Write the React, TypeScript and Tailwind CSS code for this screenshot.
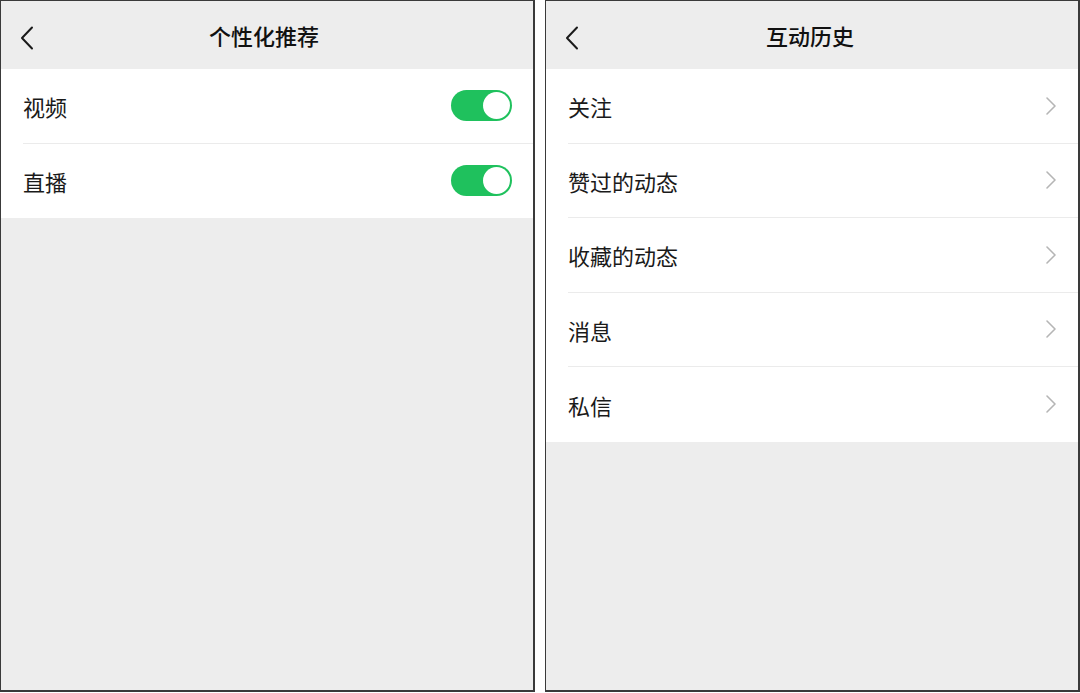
import { ReactNode } from "react";

const FONT = "font-['Noto_Sans_CJK_SC','Noto_Sans',sans-serif]";

function BackIcon() {
  return (
    <svg width="14" height="24" viewBox="0 0 14 24" fill="none">
      <path
        d="M12 1.5 L2 12 L12 22.5"
        stroke="#1a1a1a"
        strokeWidth="2"
        strokeLinecap="round"
        strokeLinejoin="round"
      />
    </svg>
  );
}

function ChevronIcon() {
  return (
    <svg width="12" height="20" viewBox="0 0 12 20" fill="none">
      <path
        d="M2 2 L10 10 L2 18"
        stroke="#b5b5b5"
        strokeWidth="1.6"
        strokeLinecap="round"
        strokeLinejoin="round"
      />
    </svg>
  );
}

function Toggle() {
  return (
    <div className="flex h-[31px] w-[61px] items-center justify-end rounded-full bg-[#1fc15d] px-[2px]">
      <div className="h-[27px] w-[27px] rounded-full bg-white" />
    </div>
  );
}

function Header({ title, shift }: { title: string; shift?: string }) {
  return (
    <div className="relative flex h-[68px] items-center justify-center bg-[#ededed]">
      <div className="absolute left-[19px] top-[25px]">
        <BackIcon />
      </div>
      <h1 className={`text-[22px] font-medium text-[#111] ${shift ?? ""}`}>
        {title}
      </h1>
    </div>
  );
}

function Row({
  label,
  right,
  last,
}: {
  label: string;
  right: ReactNode;
  last?: boolean;
}) {
  return (
    <div className="flex h-[74.5px] flex-col">
      <div className="flex flex-1 items-center justify-between pr-[21px]">
        <span className="pt-[2px] text-[22px] text-[#1a1a1a]">{label}</span>
        {right}
      </div>
      {!last && <div className="h-px bg-[#ebebeb]" />}
    </div>
  );
}

function Panel({ children }: { children: ReactNode }) {
  return (
    <div className="flex h-[692px] w-[535px] flex-col overflow-hidden border-l border-t border-r-2 border-b-2 border-[#3a3a3a] bg-[#ededed]">
      {children}
    </div>
  );
}

export default function App() {
  const history = ["关注", "赞过的动态", "收藏的动态", "消息", "私信"];

  return (
    <div className={`flex h-[693px] w-[1080px] gap-[10px] bg-white ${FONT}`}>
      <Panel>
        <Header title="个性化推荐" shift="mr-[6px]" />
        <div className="bg-white pl-[22px]">
          <Row label="视频" right={<Toggle />} />
          <Row label="直播" right={<Toggle />} last />
        </div>
      </Panel>

      <Panel>
        <Header title="互动历史" shift="mr-[4px]" />
        <div className="bg-white pl-[22px]">
          {history.map((item, i) => (
            <Row
              key={item}
              label={item}
              right={<ChevronIcon />}
              last={i === history.length - 1}
            />
          ))}
        </div>
      </Panel>
    </div>
  );
}
